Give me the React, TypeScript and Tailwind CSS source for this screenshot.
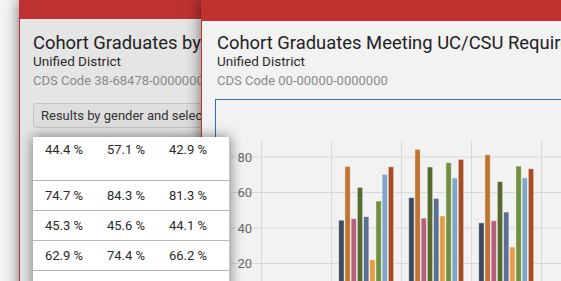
import React from "react";

// values read off the chart, in series order
const groups: number[][] = [
  [44.4, 74.7, 45.3, 62.9, 46.4, 22.2, 55.2, 70.2, 74.5],
  [57.1, 84.3, 45.6, 74.4, 56.7, 46.8, 76.8, 68.2, 78.7],
  [42.9, 81.3, 44.1, 66.2, 49, 29.3, 74.9, 68.3, 73.4],
];

const colors = [
  "#3a4a62",
  "#c07432",
  "#b6617f",
  "#566a2f",
  "#5a6f93",
  "#e49d42",
  "#71903f",
  "#7ca7c7",
  "#a84c26",
];

const rows = [
  ["44.4 %", "57.1 %", "42.9 %"],
  ["74.7 %", "84.3 %", "81.3 %"],
  ["45.3 %", "45.6 %", "44.1 %"],
  ["62.9 %", "74.4 %", "66.2 %"],
  ["", "", ""],
];

const yOf = (v: number) => 199 - v * 1.775;

function Chart() {
  return (
    <svg width="346" height="182" className="block">
      {[80, 60, 40, 20].map((t) => (
        <g key={t}>
          <line x1="15" x2="346" y1={yOf(t)} y2={yOf(t)} stroke="#d9d9d9" strokeWidth="1" />
          <text
            x="36"
            y={yOf(t) + 4.5}
            textAnchor="end"
            fontSize="13"
            fill="#6a6a6a"
            fontFamily="Roboto, sans-serif"
          >
            {t}
          </text>
        </g>
      ))}
      {[45, 115, 185, 255, 325].map((x) => (
        <line key={x} x1={x + 0.5} x2={x + 0.5} y1="40" y2="182" stroke="#d9d9d9" strokeWidth="1" />
      ))}
      {groups.map((vals, g) =>
        vals.map((v, i) => (
          <rect
            key={`${g}-${i}`}
            x={122.7 + g * 70 + i * 6.2}
            y={yOf(v)}
            width="5.4"
            height={200 - yOf(v)}
            fill={colors[i]}
            stroke="rgba(255,255,255,0.55)"
            strokeWidth="0.9"
          />
        ))
      )}
    </svg>
  );
}

function Heading({ title, code }: { title: string; code: string }) {
  return (
    <div className="whitespace-nowrap">
      <div className="text-[18.4px] leading-[20px] text-[#222]">{title}</div>
      <div className="text-[13.5px] leading-[16px] text-[#2b2b2b]">Unified District</div>
      <div className="mt-1 text-[13px] leading-[16px] text-[#8a8a8a]">CDS Code {code}</div>
    </div>
  );
}

export default function App() {
  return (
    <div
      className="relative w-[561px] h-[281px] overflow-hidden bg-[#f4f4f4]"
      style={{ fontFamily: "Roboto, 'Liberation Sans', sans-serif" }}
    >
      {/* back window, only its left part shows */}
      <div className="absolute left-[19px] top-0 w-[182px] h-[300px] flex flex-col overflow-hidden shadow-[0_0_14px_rgba(0,0,0,0.55)]">
        <div className="h-[19px] bg-[#be3131]" />
        <div className="flex-1 bg-[#e5e5e5] border-l border-[#be3131] pl-[13px] pt-[14px]">
          <Heading title="Cohort Graduates by Gender" code="38-68478-0000000" />
          <div className="mt-[14px] w-[300px] h-[25px] rounded-[3px] border border-[#c6c6c6] bg-[#dedede] pl-[7px] text-[13px] leading-[23px] text-[#333] whitespace-nowrap">
            Results by gender and selected group
          </div>
        </div>
      </div>

      {/* front window */}
      <div className="absolute left-[201px] top-0 w-[360px] h-[300px] flex flex-col overflow-hidden shadow-[0_0_14px_rgba(0,0,0,0.55)]">
        <div className="h-[21px] bg-[#c0312f]" />
        <div className="flex-1 bg-[#f2f2f2] border-l border-[#c0312f] pt-[12px]">
          <div className="pl-[15px]">
            <Heading title="Cohort Graduates Meeting UC/CSU Requirements" code="00-00000-0000000" />
          </div>
          <div className="ml-[13px] mt-[10px] border-t border-l border-[#2f6db5] bg-[#f2f2f2]">
            <Chart />
          </div>
        </div>
      </div>

      {/* results table popup */}
      <div className="absolute left-[33px] top-[137px] w-[197px] bg-white border-r border-[#c4c4c4] shadow-[0_0_12px_rgba(0,0,0,0.5)] text-[13px] text-[#2a2a2a]">
        {rows.map((r, i) => (
          <div
            key={i}
            className={`grid grid-cols-[62px_62px_62px] border-b border-[#b8b8b8] ${
              i === 0 ? "h-[44px] items-start pt-[5px]" : "h-[30px] items-center"
            }`}
          >
            {r.map((c, j) => (
              <div key={j} className="pl-[12px] leading-[15px] whitespace-nowrap">
                {c}
              </div>
            ))}
          </div>
        ))}
      </div>
    </div>
  );
}
